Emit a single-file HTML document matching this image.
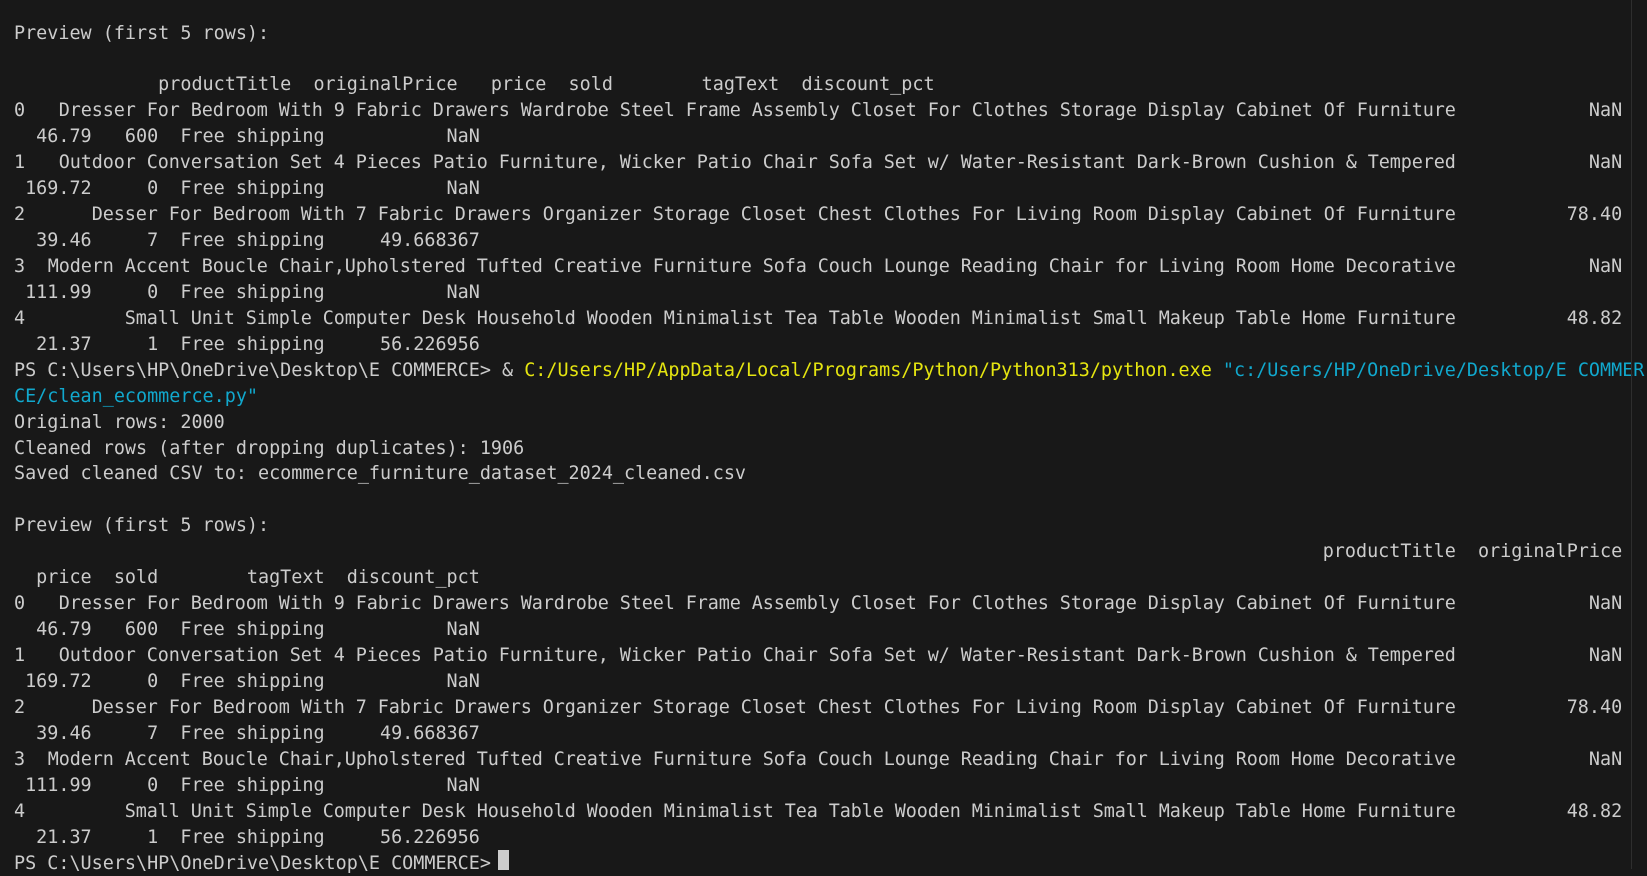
<!DOCTYPE html>
<html><head><meta charset="utf-8"><style>
html,body{margin:0;padding:0;background:#181818;width:1647px;height:869px;overflow:hidden}
#t{position:absolute;left:14px;top:20.5px;font-family:"DejaVu Sans Mono","Liberation Mono",monospace;font-size:18.43px;line-height:25.93px;color:#cccccc;white-space:pre;margin:0}
.r{display:inline-block;text-align:right;vertical-align:top}
.tt{letter-spacing:-0.09px}
.y{color:#e5e510}.c{color:#11a8cd}
#div{position:absolute;left:1631px;top:0;width:1px;height:869px;background:#2e2e2e}
#cur{position:absolute;left:498px;top:850px;width:11px;height:20px;background:#cccccc}
</style></head><body>
<pre id="t">Preview (first 5 rows):

             productTitle  originalPrice   price  sold        tagText  discount_pct
0<span class="r tt" style="width:129ch">Dresser For Bedroom With 9 Fabric Drawers Wardrobe Steel Frame Assembly Closet For Clothes Storage Display Cabinet Of Furniture</span><span class="r" style="width:15ch">NaN</span>
  46.79   600  Free shipping           NaN
1<span class="r tt" style="width:129ch">Outdoor Conversation Set 4 Pieces Patio Furniture, Wicker Patio Chair Sofa Set w/ Water-Resistant Dark-Brown Cushion &amp; Tempered</span><span class="r" style="width:15ch">NaN</span>
 169.72     0  Free shipping           NaN
2<span class="r tt" style="width:129ch">Desser For Bedroom With 7 Fabric Drawers Organizer Storage Closet Chest Clothes For Living Room Display Cabinet Of Furniture</span><span class="r" style="width:15ch">78.40</span>
  39.46     7  Free shipping     49.668367
3<span class="r tt" style="width:129ch">Modern Accent Boucle Chair,Upholstered Tufted Creative Furniture Sofa Couch Lounge Reading Chair for Living Room Home Decorative</span><span class="r" style="width:15ch">NaN</span>
 111.99     0  Free shipping           NaN
4<span class="r tt" style="width:129ch">Small Unit Simple Computer Desk Household Wooden Minimalist Tea Table Wooden Minimalist Small Makeup Table Home Furniture</span><span class="r" style="width:15ch">48.82</span>
  21.37     1  Free shipping     56.226956
PS C:\Users\HP\OneDrive\Desktop\E COMMERCE&gt; &amp; <span class="y">C:/Users/HP/AppData/Local/Programs/Python/Python313/python.exe</span> <span class="c">"c:/Users/HP/OneDrive/Desktop/E COMMER</span>
<span class="c">CE/clean_ecommerce.py"</span>
Original rows: 2000
Cleaned rows (after dropping duplicates): 1906
Saved cleaned CSV to: ecommerce_furniture_dataset_2024_cleaned.csv

Preview (first 5 rows):
<span class="r" style="width:145ch">productTitle  originalPrice</span>
  price  sold        tagText  discount_pct
0<span class="r tt" style="width:129ch">Dresser For Bedroom With 9 Fabric Drawers Wardrobe Steel Frame Assembly Closet For Clothes Storage Display Cabinet Of Furniture</span><span class="r" style="width:15ch">NaN</span>
  46.79   600  Free shipping           NaN
1<span class="r tt" style="width:129ch">Outdoor Conversation Set 4 Pieces Patio Furniture, Wicker Patio Chair Sofa Set w/ Water-Resistant Dark-Brown Cushion &amp; Tempered</span><span class="r" style="width:15ch">NaN</span>
 169.72     0  Free shipping           NaN
2<span class="r tt" style="width:129ch">Desser For Bedroom With 7 Fabric Drawers Organizer Storage Closet Chest Clothes For Living Room Display Cabinet Of Furniture</span><span class="r" style="width:15ch">78.40</span>
  39.46     7  Free shipping     49.668367
3<span class="r tt" style="width:129ch">Modern Accent Boucle Chair,Upholstered Tufted Creative Furniture Sofa Couch Lounge Reading Chair for Living Room Home Decorative</span><span class="r" style="width:15ch">NaN</span>
 111.99     0  Free shipping           NaN
4<span class="r tt" style="width:129ch">Small Unit Simple Computer Desk Household Wooden Minimalist Tea Table Wooden Minimalist Small Makeup Table Home Furniture</span><span class="r" style="width:15ch">48.82</span>
  21.37     1  Free shipping     56.226956
PS C:\Users\HP\OneDrive\Desktop\E COMMERCE&gt; </pre>
<div id="cur"></div>
<div id="div"></div>
</body></html>
